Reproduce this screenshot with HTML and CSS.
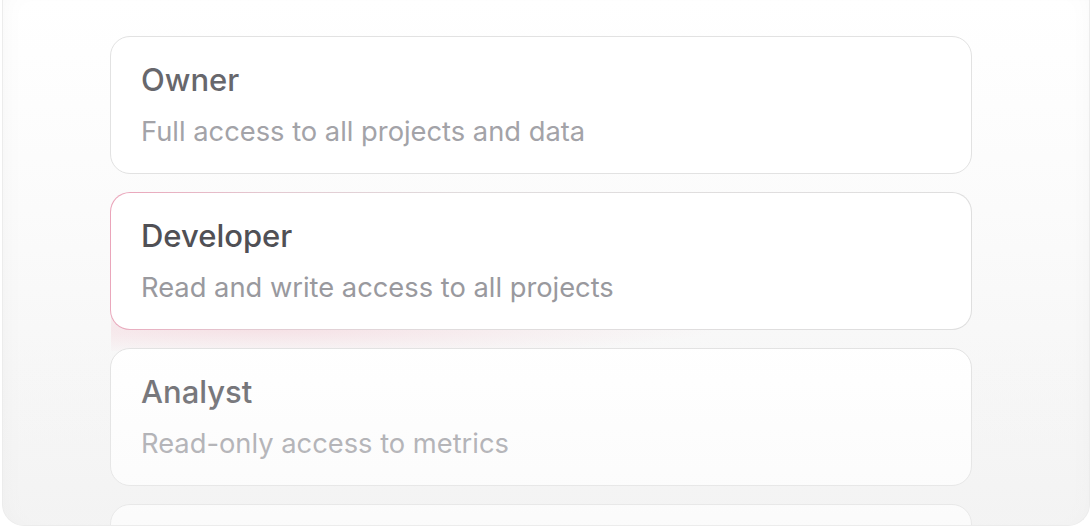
FILE: index.html
```html
<!DOCTYPE html>
<html lang="en">
<head>
<meta charset="utf-8">
<title>Roles</title>
<link rel="stylesheet" href="styles.css">
</head>
<body>
<div class="panel">
  <div class="list">
    <div class="card">
      <div class="title">Owner</div>
      <div class="desc">Full access to all projects and data</div>
    </div>
    <div class="card active">
      <div class="title">Developer</div>
      <div class="desc">Read and write access to all projects</div>
    </div>
    <div class="card">
      <div class="title">Analyst</div>
      <div class="desc">Read-only access to metrics</div>
    </div>
    <div class="card"></div>
  </div>
  <div class="fade"></div>
</div>
</body>
</html>
```

FILE: styles.css
```css
html, body {
  margin: 0;
  padding: 0;
  background: #ffffff;
  height: 528px;
  overflow: hidden;
}
body {
  font-family: "Inter", "Noto Sans", sans-serif;
  padding: 0 2px;
}
.panel {
  position: relative;
  height: 526px;
  box-sizing: border-box;
  border: 1.5px solid #ececec;
  border-top: none;
  border-radius: 0 0 22px 22px;
  background: linear-gradient(180deg, #ffffff 0%, #fbfbfb 40%, #f3f3f3 100%);
  box-shadow: inset 14px 0 30px -20px rgba(0,0,0,0.05), inset -14px 0 30px -20px rgba(0,0,0,0.04);
  overflow: hidden;
  padding: 36px 0 0 106.5px;
}
.list {
  width: 862px;
  display: flex;
  flex-direction: column;
  gap: 18px;
  isolation: isolate;
}
.card {
  position: relative;
  height: 138px;
  box-sizing: border-box;
  border: 1.5px solid #e2e2e2;
  border-radius: 20px;
  background: #ffffff;
  padding: 23px 30.5px 0;
  flex-shrink: 0;
}
.title {
  font-size: 31px;
  font-weight: 500;
  color: #67676c;
  line-height: 40px;
}
.desc {
  margin-top: 15px;
  font-size: 27.3px;
  color: #a3a3a8;
  line-height: 34px;
}
.card.active {
  border: 1.5px solid transparent;
  background:
    linear-gradient(#ffffff, #ffffff) padding-box,
    linear-gradient(100deg, #eba3b9 0%, #e3c9d1 18%, #e0dcdd 40%, #dfdfdf 100%) border-box;
}
.card.active::after {
  content: "";
  position: absolute;
  left: 0;
  right: 260px;
  bottom: -22px;
  height: 50px;
  background: radial-gradient(ellipse at 25% 55%, rgba(240, 170, 185, 0.30) 0%, rgba(240, 170, 185, 0.10) 45%, rgba(240, 170, 185, 0) 72%);
  z-index: -1;
  pointer-events: none;
}
.card.active .title { color: #505055; }
.card.active .desc { color: #99999e; }
.fade {
  position: absolute;
  left: 0; right: 0; bottom: 0;
  height: 190px;
  background: linear-gradient(180deg, rgba(244,244,244,0) 0%, rgba(244,244,244,0.38) 100%);
  pointer-events: none;
}
```
